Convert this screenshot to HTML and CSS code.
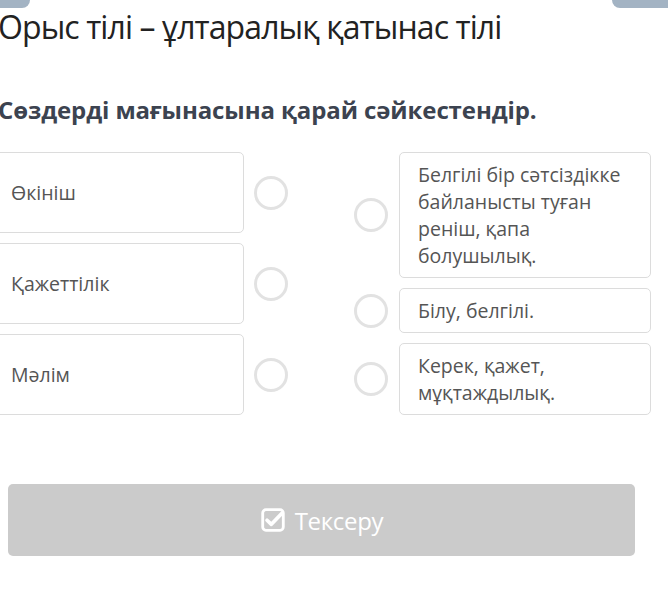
FILE: index.html
```html
<!DOCTYPE html>
<html>
<head>
<meta charset="utf-8">
<link rel="stylesheet" href="styles.css">
</head>
<body>
<div class="tabs"><span class="tab tab-left"></span><span class="tab tab-right"></span></div>
<div class="page">
  <h1 class="title">Орыс тілі – ұлтаралық қатынас тілі</h1>
  <h2 class="question">Сөздерді мағынасына қарай сәйкестендір.</h2>
  <div class="match">
    <div class="col col-left">
      <div class="row"><div class="card left-card">Өкініш</div><span class="dot"></span></div>
      <div class="row"><div class="card left-card">Қажеттілік</div><span class="dot"></span></div>
      <div class="row"><div class="card left-card">Мәлім</div><span class="dot"></span></div>
    </div>
    <div class="col col-right">
      <div class="row"><span class="dot"></span><div class="card right-card">Белгілі бір сәтсіздікке байланысты туған реніш, қапа болушылық.</div></div>
      <div class="row"><span class="dot"></span><div class="card right-card">Білу, белгілі.</div></div>
      <div class="row"><span class="dot"></span><div class="card right-card">Керек, қажет, мұқтаждылық.</div></div>
    </div>
  </div>
  <button class="check"><svg class="check-icon" viewBox="0 0 24 24" width="26" height="26"><rect x="2.5" y="2.5" width="19" height="19" rx="3" fill="none" stroke="#fff" stroke-width="2.6"/><path d="M6.5 12.2 L10.5 16 L20.5 5.5" fill="none" stroke="#fff" stroke-width="3.4" stroke-linecap="round" stroke-linejoin="round"/></svg><span>Тексеру</span></button>
</div>
</body>
</html>
```
FILE: styles.css
```css
html, body {
  margin: 0;
  padding: 0;
  background: #fff;
  font-family: "Open Sans", "Noto Sans", sans-serif;
  overflow: hidden;
}
.tabs {
  display: flex;
  justify-content: space-between;
  height: 8px;
}
.tab {
  display: block;
  height: 8px;
  background: #a3b3c3;
  border-radius: 0 0 8px 8px;
}
.tab-left { width: 40px; margin-left: -10px; }
.tab-right { width: 70px; margin-right: -14px; }
.page {
  margin-left: -10px;
  width: 670px;
}
.title {
  margin: 1px 0 0 8px;
  font-size: 32px;
  font-weight: 400;
  color: #222;
  line-height: 36px;
  letter-spacing: -0.9px;
}
.question {
  margin: 50px 0 0 8px;
  font-size: 24px;
  font-weight: 700;
  color: #3c4350;
  line-height: 30px;
  letter-spacing: -0.1px;
}
.match {
  display: flex;
  margin-top: 27px;
}
.col {
  display: flex;
  flex-direction: column;
  gap: 10px;
}
.col-left { width: 318px; }
.col-right { margin-left: 46px; }
.row {
  display: flex;
  align-items: center;
}
.card {
  border: 1px solid #dcdcdc;
  border-radius: 5px;
  color: #555;
  box-sizing: border-box;
}
.left-card {
  width: 254px;
  height: 81px;
  padding: 26px 0 0 20px;
  font-size: 19.5px;
  line-height: 27px;
}
.dot {
  display: block;
  width: 34px;
  height: 34px;
  box-sizing: border-box;
  border: 3px solid #e2e2e2;
  border-radius: 50%;
  margin-left: 10px;
}
.col-right .dot { margin-left: 0; margin-right: 11px; }
.right-card {
  width: 252px;
  padding: 8px 8px 8px 18px;
  font-size: 19.5px;
  line-height: 27px;
}
.check {
  display: flex;
  align-items: center;
  justify-content: center;
  gap: 9px;
  margin: 69px 0 0 18px;
  width: 627px;
  height: 72px;
  border: none;
  border-radius: 5px;
  background: #cbcbcb;
  color: #fff;
  font-family: "Open Sans", "Noto Sans", sans-serif;
  font-size: 24px;
  padding: 0;
}
.check span { letter-spacing: -0.3px; }
```
